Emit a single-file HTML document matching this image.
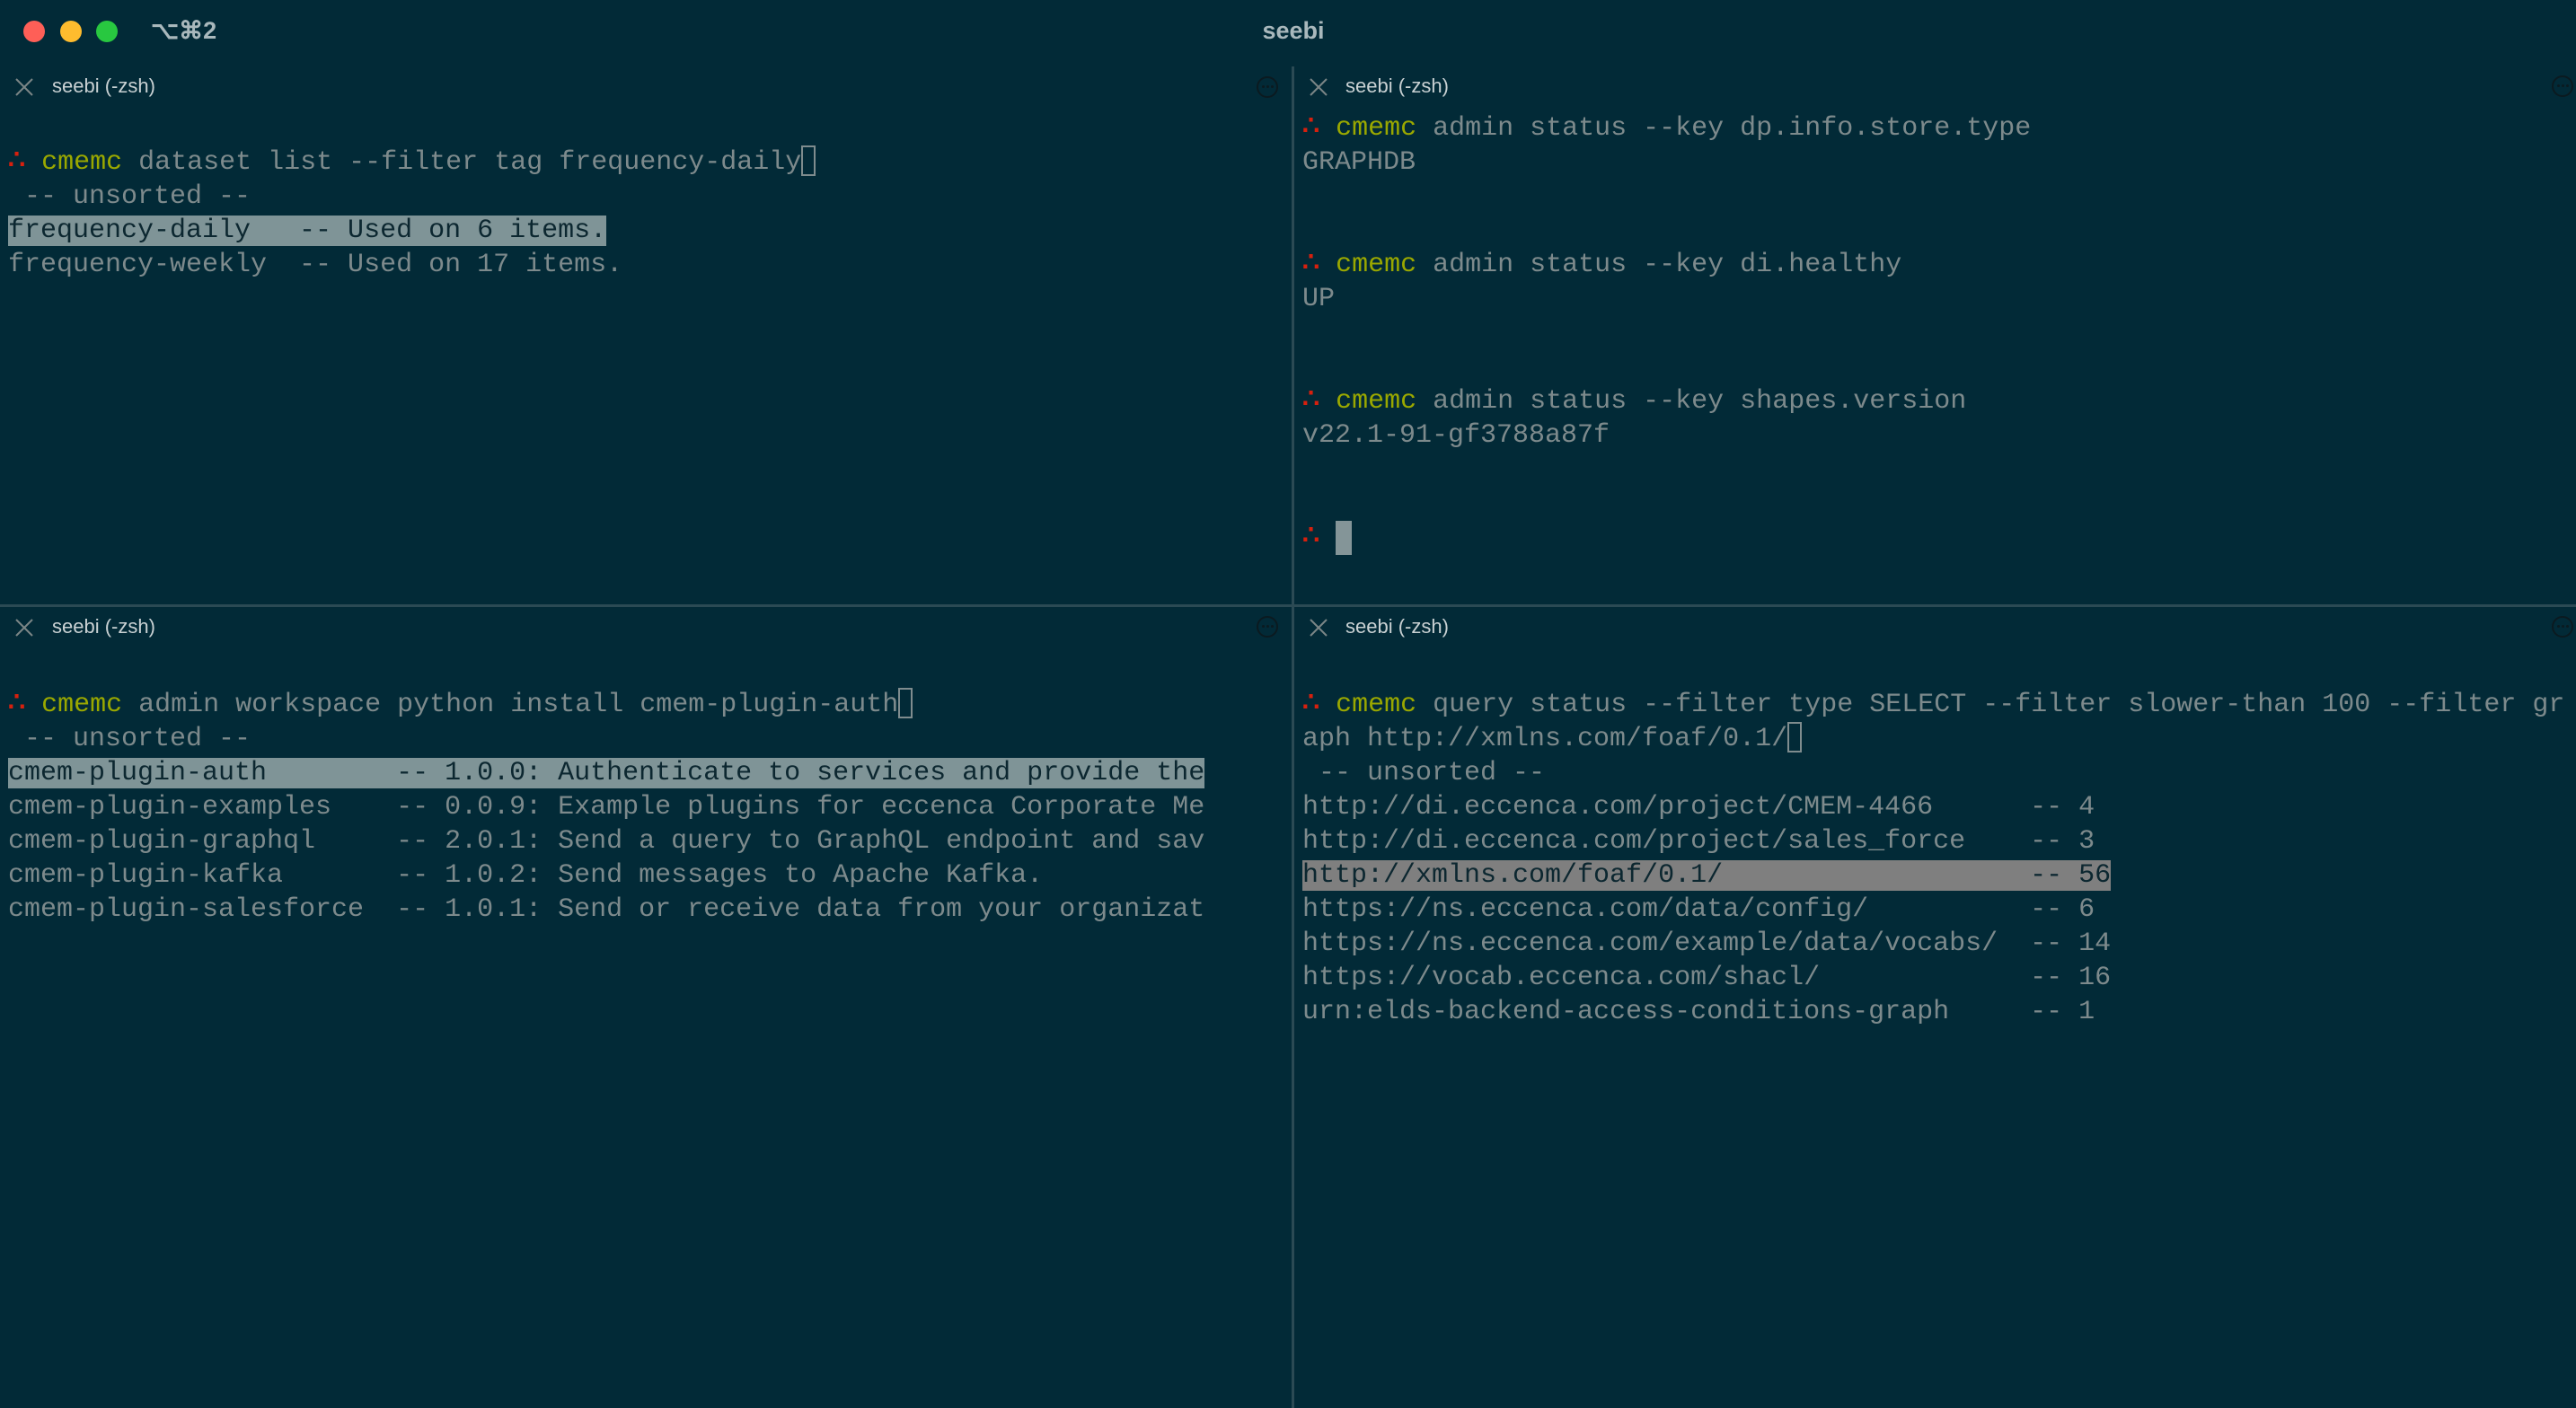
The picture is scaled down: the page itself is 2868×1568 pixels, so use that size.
<!DOCTYPE html>
<html><head><meta charset="utf-8"><style>
html,body{margin:0;padding:0}
body{width:2868px;height:1568px;background:#022a37;position:relative;overflow:hidden;font-family:"Liberation Sans",sans-serif}
.dot{position:absolute;top:23px;width:24px;height:24px;border-radius:50%}
.t{position:absolute;font-family:"Liberation Mono",monospace;font-size:30px;line-height:38px;color:#7d8a8c}
.t div{height:38px;white-space:pre}
.g{color:#9aa800}
.r{color:#d7200e;font-weight:bold}
.hl{background:#7f9497;color:#0c2730}
.hl2{background:#7f7f7f;color:#0c2730}
.tab{position:absolute;font-size:22px;color:#c9d1d3}
.pane{position:absolute;overflow:hidden}
.vline{position:absolute;left:1438px;top:74px;width:3px;height:1494px;background:#2b4a54}
.hline{position:absolute;left:0;top:673px;width:2868px;height:3px;background:#2b4a54}
.circ{position:absolute;width:20px;height:20px;border:2px solid #0b1a20;border-radius:50%;}
.circ:after{content:"";position:absolute;left:4px;top:8px;width:3px;height:3px;background:#0b1a20;border-radius:50%;box-shadow:5px 0 #0b1a20,10px 0 #0b1a20}
</style></head><body>
<div class="dot" style="left:26px;background:#fe5f57"></div>
<div class="dot" style="left:67px;background:#febc2e"></div>
<div class="dot" style="left:107px;background:#28c840"></div>
<div style="position:absolute;left:168px;top:19px;font-size:27px;font-weight:bold;color:#a9b8bc">⌥⌘2</div>
<div style="position:absolute;left:0;width:2880px;text-align:center;top:19px;font-size:27px;font-weight:bold;color:#a9b8bc">seebi</div>

<div class="vline"></div><div class="hline"></div>

<svg style="position:absolute;left:16px;top:86px" width="22" height="22"><path d="M2 2L20 20M20 2L2 20" stroke="#7b8586" stroke-width="2"/></svg>
<div class="tab" style="left:58px;top:83px">seebi (-zsh)</div>
<svg style="position:absolute;left:1457px;top:86px" width="22" height="22"><path d="M2 2L20 20M20 2L2 20" stroke="#7b8586" stroke-width="2"/></svg>
<div class="tab" style="left:1498px;top:83px">seebi (-zsh)</div>
<svg style="position:absolute;left:16px;top:688px" width="22" height="22"><path d="M2 2L20 20M20 2L2 20" stroke="#7b8586" stroke-width="2"/></svg>
<div class="tab" style="left:58px;top:685px">seebi (-zsh)</div>
<svg style="position:absolute;left:1457px;top:688px" width="22" height="22"><path d="M2 2L20 20M20 2L2 20" stroke="#7b8586" stroke-width="2"/></svg>
<div class="tab" style="left:1498px;top:685px">seebi (-zsh)</div>

<div class="circ" style="left:1399px;top:85px"></div>
<div class="circ" style="left:2841px;top:84px"></div>
<div class="circ" style="left:1399px;top:686px"></div>
<div class="circ" style="left:2841px;top:686px"></div>

<div class="pane" style="left:0;top:124px;width:1400px;height:548px">
<div class="t" style="left:9px;top:0">
<div></div>
<div><span class="r">∴</span> <span class="g">cmemc</span> dataset list --filter tag frequency-daily<span style="display:inline-block;width:16px;height:34px;border:2px solid #7f8c8e;box-sizing:border-box;vertical-align:-8px"></span></div>
<div> -- unsorted --</div>
<div><span class="hl">frequency-daily   -- Used on 6 items.</span></div>
<div>frequency-weekly  -- Used on 17 items.</div>
</div></div>

<div class="pane" style="left:1441px;top:124px;width:1427px;height:548px">
<div class="t" style="left:9px;top:0">
<div><span class="r">∴</span> <span class="g">cmemc</span> admin status --key dp.info.store.type</div>
<div>GRAPHDB</div>
<div></div><div></div>
<div><span class="r">∴</span> <span class="g">cmemc</span> admin status --key di.healthy</div>
<div>UP</div>
<div></div><div></div>
<div><span class="r">∴</span> <span class="g">cmemc</span> admin status --key shapes.version</div>
<div>v22.1-91-gf3788a87f</div>
<div></div><div></div>
<div><span class="r">∴</span> <span style="display:inline-block;width:18px;height:38px;background:#849598;vertical-align:top"></span></div>
</div></div>

<div class="pane" style="left:0;top:728px;width:1400px;height:840px">
<div class="t" style="left:9px;top:0">
<div></div>
<div><span class="r">∴</span> <span class="g">cmemc</span> admin workspace python install cmem-plugin-auth<span style="display:inline-block;width:16px;height:34px;border:2px solid #7f8c8e;box-sizing:border-box;vertical-align:-8px"></span></div>
<div> -- unsorted --</div>
<div><span class="hl">cmem-plugin-auth        -- 1.0.0: Authenticate to services and provide the</span></div>
<div>cmem-plugin-examples    -- 0.0.9: Example plugins for eccenca Corporate Me</div>
<div>cmem-plugin-graphql     -- 2.0.1: Send a query to GraphQL endpoint and sav</div>
<div>cmem-plugin-kafka       -- 1.0.2: Send messages to Apache Kafka.</div>
<div>cmem-plugin-salesforce  -- 1.0.1: Send or receive data from your organizat</div>
</div></div>

<div class="pane" style="left:1441px;top:728px;width:1427px;height:840px">
<div class="t" style="left:9px;top:0">
<div></div>
<div><span class="r">∴</span> <span class="g">cmemc</span> query status --filter type SELECT --filter slower-than 100 --filter gr</div>
<div>aph http://xmlns.com/foaf/0.1/<span style="display:inline-block;width:16px;height:34px;border:2px solid #7f8c8e;box-sizing:border-box;vertical-align:-8px"></span></div>
<div> -- unsorted --</div>
<div>http://di.eccenca.com/project/CMEM-4466      -- 4</div>
<div>http://di.eccenca.com/project/sales_force    -- 3</div>
<div><span class="hl2">http://xmlns.com/foaf/0.1/                   -- 56</span></div>
<div>https://ns.eccenca.com/data/config/          -- 6</div>
<div>https://ns.eccenca.com/example/data/vocabs/  -- 14</div>
<div>https://vocab.eccenca.com/shacl/             -- 16</div>
<div>urn:elds-backend-access-conditions-graph     -- 1</div>
</div></div>
</body></html>
